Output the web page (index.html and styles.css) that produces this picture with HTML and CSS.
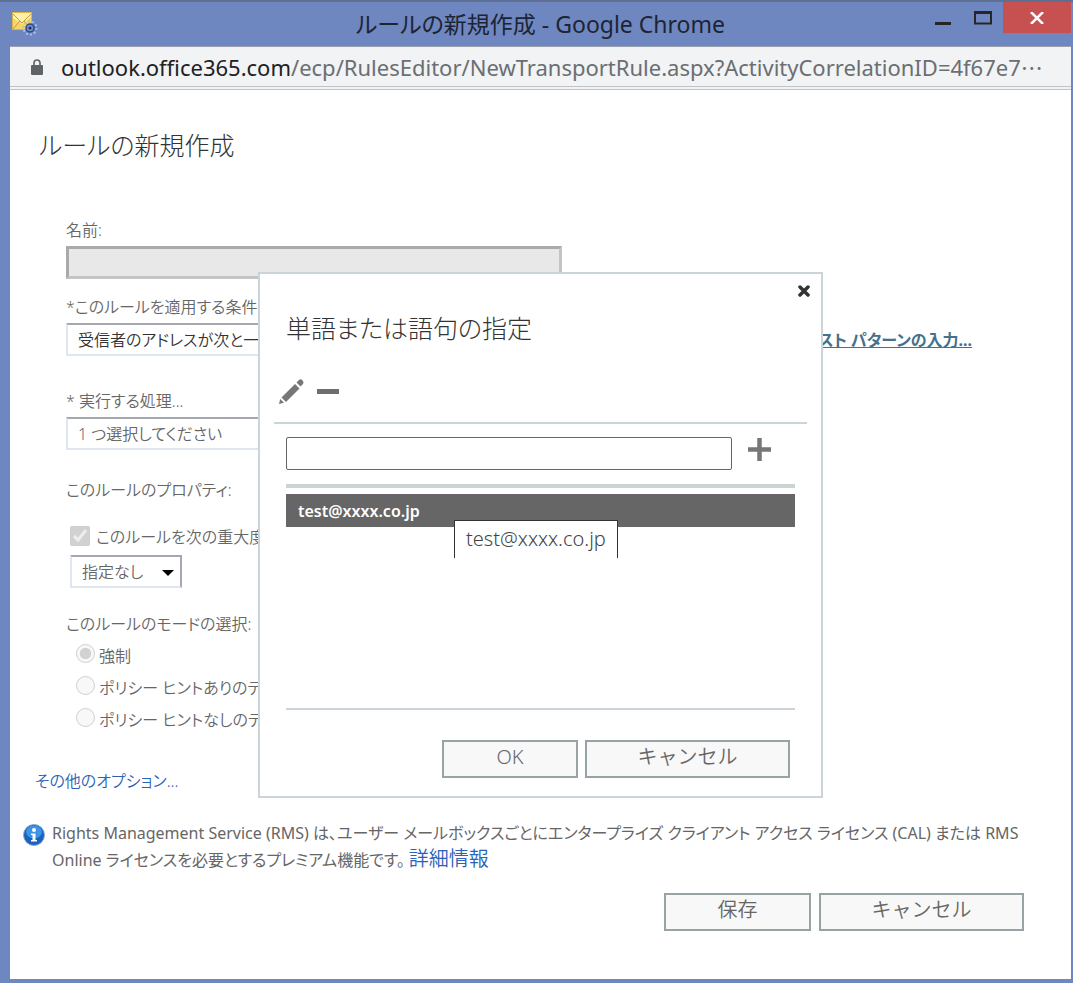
FILE: index.html
```
<!DOCTYPE html>
<html lang="ja">
<head>
    <meta charset="UTF-8">
    <meta name="viewport" content="width=device-width, initial-scale=1.0">
    <title>ルールの新規作成</title>
    <link rel="stylesheet" href="styles.css">
</head>
<body>
    <div class="window">
        <div class="titlebar">
            <svg class="app-icon" width="26" height="24" viewBox="0 0 26 24">
                <rect x="0.5" y="0.5" width="19" height="17" fill="#f6d667" stroke="#d9b64a"/>
                <path d="M1 1h18v4l-9 7-9-6z" fill="#fdf0a8"/>
                <path d="M1 2l9 9 9-9M1 17l7-8M19 17l-7-8" fill="none" stroke="#c99a35"/>
                <circle cx="18" cy="16" r="6.5" fill="none" stroke="#a9c0ea" stroke-width="2" stroke-dasharray="2 2"/>
                <circle cx="18" cy="16" r="4" fill="#6c8fd0" stroke="#28488f" stroke-width="1.5"/>
                <circle cx="18" cy="16" r="1.5" fill="#26303f"/>
            </svg>
            <div class="caption">ルールの新規作成 - Google Chrome</div>
            <div class="controls">
                <button class="win-btn" aria-label="最小化">
                    <svg width="16" height="14"><rect y="11" width="16" height="3" fill="#262626"/></svg>
                </button>
                <button class="win-btn" aria-label="最大化">
                    <svg width="18" height="14"><path d="M1 1.5h16v11H1z" fill="none" stroke="#262626" stroke-width="2"/><path d="M0 1.5h18" stroke="#262626" stroke-width="3"/></svg>
                </button>
                <button class="win-btn win-close" aria-label="閉じる">
                    <svg width="14" height="12"><path d="M1 0l12 12M13 0L1 12" stroke="#fff" stroke-width="2.5"/></svg>
                </button>
            </div>
        </div>
        <div class="address">
            <svg class="lock" width="12" height="16" viewBox="0 0 12 16">
                <rect y="6" width="12" height="10" rx="1" fill="#5f6368"/>
                <path d="M3 7V4a3 3 0 0 1 6 0v3" fill="none" stroke="#5f6368" stroke-width="1.6"/>
            </svg>
            <div class="url"><span class="host">outlook.office365.com</span>/ecp/RulesEditor/NewTransportRule.aspx?ActivityCorrelationID=4f67e7⋯</div>
        </div>

        <div class="page">
            <h1 class="title">ルールの新規作成</h1>
            <form class="form">
                <label class="label" for="name">名前:</label>
                <input id="name" class="name" type="text" disabled>

                <label class="label" for="cond">*このルールを適用する条件...</label>
                <div class="row">
                    <select id="cond" class="select wide dark">
                        <option>受信者のアドレスが次と一致する</option>
                    </select>
                    <a class="pattern" href="#">テキスト パターンの入力...</a>
                </div>

                <label class="label action" for="action">* 実行する処理...</label>
                <select id="action" class="select wide">
                    <option>1 つ選択してください</option>
                </select>

                <div class="label props">このルールのプロパティ:</div>
                <div class="check-row">
                    <input id="audit" class="check" type="checkbox" checked disabled>
                    <label for="audit">このルールを次の重大度レベルで監査する:</label>
                </div>
                <div class="select-box">
                    <select class="select level" aria-label="重大度">
                        <option>指定なし</option>
                    </select>
                </div>

                <div class="label mode">このルールのモードの選択:</div>
                <div class="radio-row">
                    <input id="m1" class="radio" type="radio" name="mode" checked disabled>
                    <label for="m1">強制</label>
                </div>
                <div class="radio-row">
                    <input id="m2" class="radio" type="radio" name="mode" disabled>
                    <label for="m2">ポリシー ヒントありのテスト</label>
                </div>
                <div class="radio-row">
                    <input id="m3" class="radio" type="radio" name="mode" disabled>
                    <label for="m3">ポリシー ヒントなしのテスト</label>
                </div>
            </form>
            <a class="more" href="#">その他のオプション...</a>

            <div class="info">
                <svg class="info-icon" width="22" height="22" viewBox="0 0 22 22">
                    <circle cx="11" cy="11" r="10.5" fill="#1763bd" stroke="#8fa9c9"/>
                    <ellipse cx="11" cy="8" rx="8" ry="6.5" fill="#3d93e6"/>
                    <circle cx="11" cy="6" r="2" fill="#fff"/>
                    <path d="M8 9.5h4.5V16H14v1.5H8V16h1.500v-5H8z" fill="#fff"/>
                </svg>
                <p class="info-text">Rights Management Service (RMS) は、ユーザー メールボックスごとにエンタープライズ クライアント アクセス ライセンス (CAL) または RMS Online ライセンスを必要とするプレミアム機能です。<a class="detail" href="#">詳細情報</a></p>
            </div>

            <div class="buttons">
                <button class="btn save">保存</button>
                <button class="btn cancel">キャンセル</button>
            </div>

            <div class="modal" role="dialog" aria-labelledby="dlg">
                <button class="icon-btn close" aria-label="閉じる">
                    <svg width="12" height="12"><path d="M2 2l8 8M10 2l-8 8" stroke="#333" stroke-width="3.500" stroke-linecap="round"/></svg>
                </button>
                <h2 id="dlg" class="title modal-title">単語または語句の指定</h2>
                <div class="toolbar">
                    <button class="icon-btn" aria-label="編集">
                        <svg width="25" height="25" viewBox="0 0 25 25" fill="#777">
                            <path d="M2.500 18.500L16 5l4.500 4.500L7 23z"/>
                            <path d="M17.500 3.500L20 1q1-1 2.500-.5l1.500 1.500q1 1.500 0 3L21.500 7.500z"/>
                            <path d="M0 25l1.200-5 3.800 3.800z"/>
                        </svg>
                    </button>
                    <button class="icon-btn" aria-label="削除">
                        <svg width="22" height="5"><rect width="22" height="5" fill="#6e6e6e"/></svg>
                    </button>
                </div>
                <div class="add-row">
                    <input class="word" type="text" aria-label="単語または語句">
                    <button class="icon-btn add" aria-label="追加">
                        <svg width="23" height="23"><path d="M0 11.500h23M11.500 0v23" stroke="#777" stroke-width="4.500"/></svg>
                    </button>
                </div>
                <div class="list">
                    <div class="item">test@xxxx.co.jp</div>
                    <div class="tip">test@xxxx.co.jp</div>
                </div>
                <div class="modal-buttons">
                    <button class="btn ok">OK</button>
                    <button class="btn cancel">キャンセル</button>
                </div>
            </div>
        </div>
    </div>
</body>
</html>
```
FILE: styles.css
```
* {
    box-sizing: border-box;
}
body {
    margin: 0;
    color: #666;
    font-family: "Noto Sans", "Noto Sans CJK JP", sans-serif;
    font-size: 16px;
    font-weight: 350;
    line-height: 24px;
    font-feature-settings: "palt";
}
button, input, select {
    font: inherit;
    color: inherit;
    font-feature-settings: inherit;
}
a {
    color: #2a62b8;
    text-decoration: none;
}

/* browser window */
.window {
    min-height: 100vh;
    display: flex;
    flex-direction: column;
    background-color: #6e87c0;
    border-top: 2px solid #5f6f92;
    padding: 0 2px 4px 10px;
}
.titlebar {
    height: 44px;
    display: grid;
    grid-template-columns: 150px 1fr 150px;
}
.app-icon {
    margin: 10px 0 0 2px;
}
.caption {
    color: #1d2433;
    font-size: 23px;
    font-weight: 400;
    line-height: 44px;
    text-align: center;
    white-space: nowrap;
}
.controls {
    display: flex;
    justify-content: flex-end;
}
.win-btn {
    width: 40px;
    height: 31px;
    padding: 0;
    display: flex;
    justify-content: center;
    align-items: center;
    border: 0;
    background: none;
}
.win-close {
    width: 68px;
    background-color: #c75050;
}
.address {
    height: 44px;
    display: flex;
    align-items: center;
    gap: 18px;
    padding-left: 21px;
    background-color: #f1f3f4;
    border-top: 1px solid #9aa0ad;
    border-bottom: 4px double #c0c2c8;
}
.lock {
    flex-shrink: 0;
}
.url {
    color: #6b6e72;
    font-size: 22px;
    font-weight: 400;
    white-space: nowrap;
}
.host {
    color: #202124;
}

/* rule form */
.page {
    position: relative;
    flex: 1;
    padding: 37px 47px 48px 13px;
    background-color: #fff;
}
.title {
    margin: 0 0 0 16px;
    color: #333;
    font-size: 25px;
    font-weight: 300;
    line-height: 36px;
}
.form {
    margin: 55px 0 0 43px;
}
.label {
    display: block;
    margin-bottom: 4px;
}
.name {
    display: block;
    width: 496px;
    height: 33px;
    margin-bottom: 16px;
    background-color: #e8e8e8;
    border: 3px solid #c4c4c4;
    border-top-color: #aaa;
    border-left-color: #aaa;
}
.row {
    display: flex;
    justify-content: space-between;
    align-items: center;
    padding-right: 52px;
}
.select {
    height: 33px;
    padding: 1px 10px 0;
    appearance: none;
    background-color: #fff;
    border: 2px solid #dfe6f1;
    border-top-color: #a5a8b0;
    border-right-color: #a5a8b0;
    border-radius: 0;
    line-height: 28px;
}
.wide {
    width: 496px;
}
.dark {
    color: #333;
}
.pattern {
    color: #46708c;
    font-weight: 700;
    text-decoration: underline;
}
.action {
    margin-top: 33px;
}
.props {
    margin: 28px 0 23px;
}
.check-row {
    display: flex;
    gap: 6px;
    margin: 0 0 6px 4px;
}
.check {
    width: 20px;
    height: 20px;
    margin: 1px 0 0;
}
.select-box {
    position: relative;
    width: 112px;
    margin-left: 4px;
}
.select-box::after {
    content: "";
    position: absolute;
    right: 8px;
    top: 15px;
    border: 6px solid transparent;
    border-top-color: #000;
    border-bottom: 0;
    pointer-events: none;
}
.level {
    display: block;
    width: 100%;
}
.mode {
    margin-top: 24px;
}
.radio-row {
    display: flex;
    gap: 4px;
    margin-left: 10px;
    line-height: 32px;
}
.radio {
    width: 19px;
    height: 19px;
    margin: 4px 0 0;
}
.more {
    display: block;
    margin: 33px 0 27px 12px;
}
.info {
    display: flex;
    gap: 7px;
    margin-right: -16px;
    font-weight: 400;
    line-height: 26px;
}
.info-icon {
    flex-shrink: 0;
    margin-top: 4px;
}
.info-text {
    margin: 0;
}
.detail {
    margin-left: 4px;
    font-size: 20px;
    font-weight: 350;
}
.buttons {
    display: flex;
    justify-content: flex-end;
    gap: 8px;
    margin-top: 20px;
}
.btn {
    height: 38px;
    padding: 0 0 4px;
    background-color: #f8f8f8;
    border: 2px solid #98a3a6;
    font-size: 20px;
    font-feature-settings: normal;
}
.save {
    width: 147px;
}
.cancel {
    width: 205px;
}

/* word dialog */
.modal {
    position: absolute;
    top: 182px;
    left: 0;
    right: 0;
    width: 565px;
    margin: 0 auto;
    padding: 36px 14px 18px;
    background-color: #fff;
    border: 2px solid #cbd4d8;
}
.icon-btn {
    padding: 0;
    display: flex;
    border: 0;
    background: none;
}
.close {
    position: absolute;
    top: 11px;
    right: 11px;
}
.modal-title {
    margin-left: 12px;
}
.toolbar {
    display: flex;
    align-items: center;
    gap: 13px;
    padding: 33px 5px 18px;
    border-bottom: 2px solid #cbd4d8;
}
.add-row {
    display: flex;
    gap: 16px;
    margin: 0 12px;
    padding: 13px 0 14px;
    border-bottom: 4px solid #cbd4d4;
}
.add {
    margin-top: 1px;
}
.word {
    width: 446px;
    height: 33px;
    border: 1px solid #666;
    border-radius: 2px;
}
.list {
    position: relative;
    height: 222px;
    margin: 0 12px;
    padding-top: 6px;
    border-bottom: 2px solid #cbd4d8;
}
.item {
    height: 33px;
    padding-left: 12px;
    background-color: #666;
    color: #fff;
    font-weight: 600;
    line-height: 34px;
}
.tip {
    position: absolute;
    top: 32px;
    left: 168px;
    padding: 6px 11px 7px;
    background-color: #fff;
    border: 1px solid #333;
    border-bottom: 0;
    color: #444;
    font-size: 20px;
    font-weight: 300;
}
.modal-buttons {
    display: flex;
    justify-content: flex-end;
    gap: 7px;
    margin: 30px 17px 0 0;
}
.ok {
    width: 136px;
}
```
